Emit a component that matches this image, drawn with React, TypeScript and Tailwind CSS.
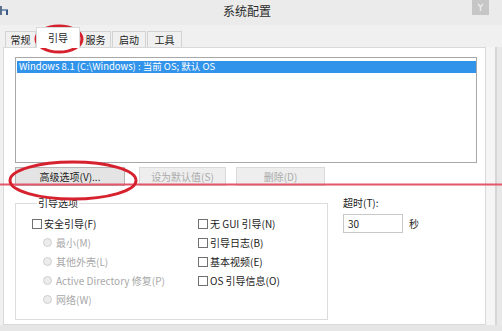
import React from "react";

function Check({ label }: { label: string }) {
  return (
    <div className="flex h-[19px] items-center">
      <span className="w-[10px] h-[10px] border border-[#707070] bg-white" />
      <span className="ml-[2px]">{label}</span>
    </div>
  );
}

function Radio({ label }: { label: string }) {
  return (
    <div className="flex h-[19px] items-center pl-[11px] text-[#a8a8a8]">
      <span className="w-[9px] h-[9px] rounded-full border border-[#cfcfcf] bg-[#ececec]" />
      <span className="ml-[4px]">{label}</span>
    </div>
  );
}

function Tab({ label, w, selected }: { label: string; w: string; selected?: boolean }) {
  return selected ? (
    <div className={`${w} h-[21px] -mb-px relative z-10 bg-white border border-b-0 border-[#d9d9d9] flex items-center justify-center text-[10px]`}>
      {label}
    </div>
  ) : (
    <div className={`${w} h-[16px] bg-[#f0f0f0] border border-b-0 border-[#d3d3d3] flex items-center justify-center text-[10px]`}>
      {label}
    </div>
  );
}

export default function App() {
  return (
    <div className="relative w-[502px] h-[331px] overflow-hidden bg-[#f0f0f0] font-['Noto_Sans_CJK_SC','Noto_Sans',sans-serif] text-[10px] leading-none text-[#1c1c1c]">
      {/* title bar */}
      <div className="h-[25px] bg-[#ebebeb] flex items-start">
        <div className="w-[10px] pt-[5px]">
          <svg width="10" height="11" viewBox="0 0 10 11">
            <rect x="0" y="1" width="2" height="9" fill="#5a6f8c" />
            <rect x="2" y="4" width="6" height="2" fill="#7d95b8" />
            <rect x="6" y="5" width="2" height="5" fill="#3e5a86" />
          </svg>
        </div>
        <div className="ml-[213px] pt-[5px] text-[12px] text-[#2a2a2a]">系统配置</div>
        <div className="flex-1" />
        <div className="mr-[13px] w-[17px] h-[15px] bg-[#c6c6c6] flex items-center justify-center">
          <svg width="7" height="9" viewBox="0 0 7 9">
            <path d="M1 1 L3.5 4 L6 1 M3.5 4 L3.5 8" stroke="#ebebeb" strokeWidth="1.4" fill="none" />
          </svg>
        </div>
      </div>

      {/* tabs */}
      <div className="h-[22px] flex items-end pl-[5px]">
        <Tab label="常规" w="w-[31px]" />
        <Tab label="引导" w="w-[44px]" selected />
        <Tab label="服务" w="w-[31px]" />
        <div className="w-[1px]" />
        <Tab label="启动" w="w-[34px]" />
        <div className="w-[1px]" />
        <Tab label="工具" w="w-[35px]" />
      </div>

      {/* body */}
      <div className="flex h-[278px]">
        <div className="ml-[3px] w-[483px] h-full bg-white border border-[#d9d9d9] flex flex-col">
          {/* list */}
          <div className="ml-[11px] mt-[9px] w-[462px] h-[106px] border border-[#a8a8a8] pt-[3px] pl-[1px]">
            <div className="h-[12px] bg-[#3193e9] text-white text-[9.5px] flex items-center pl-[2px] whitespace-nowrap">
              Windows 8.1 (C:\Windows) : 当前 OS; 默认 OS
            </div>
          </div>

          {/* buttons */}
          <div className="mt-[4px] flex h-[19px]">
            <div className="ml-[11px] w-[110px] h-full bg-[#e4e4e4] border border-[#b4b4b4] flex items-center justify-center">
              高级选项(V)...
            </div>
            <div className="ml-[14px] w-[87px] h-full bg-[#eeeeee] border border-[#dadada] flex items-center justify-center text-[#ababab]">
              设为默认值(S)
            </div>
            <div className="ml-[10px] w-[89px] h-full bg-[#eeeeee] border border-[#dadada] flex items-center justify-center text-[#ababab]">
              删除(D)
            </div>
          </div>

          {/* options */}
          <div className="mt-[11px] flex">
            <fieldset className="ml-[11px] w-[313px] h-[123px] border border-[#dcdcdc] pl-[16px]">
              <legend className="ml-[5px] px-[1px] h-[12px] leading-[12px]">引导选项</legend>
              <div className="mt-[5px] grid grid-cols-[166px_1fr]">
                <div className="flex flex-col">
                  <Check label="安全引导(F)" />
                  <Radio label="最小(M)" />
                  <Radio label="其他外壳(L)" />
                  <Radio label="Active Directory 修复(P)" />
                  <Radio label="网络(W)" />
                </div>
                <div className="flex flex-col">
                  <Check label="无 GUI 引导(N)" />
                  <Check label="引导日志(B)" />
                  <Check label="基本视频(E)" />
                  <Check label="OS 引导信息(O)" />
                </div>
              </div>
            </fieldset>
            <div className="ml-[15px] flex flex-col">
              <div className="h-[12px] leading-[12px]">超时(T):</div>
              <div className="mt-[5px] flex items-center">
                <div className="w-[60px] h-[19px] border border-[#c8c8c8] bg-white flex items-center pl-[4px]">30</div>
                <span className="ml-[6px]">秒</span>
              </div>
            </div>
          </div>
        </div>
        {/* right edge */}
        <div className="flex-1 flex">
          <div className="w-[9px] bg-[#f5f5f5]" />
          <div className="w-[2px] bg-[#d6d6d6]" />
          <div className="flex-1 bg-[#e8e8e8]" />
        </div>
      </div>
      <div className="h-[6px] bg-[#e6e6e6]" />

      {/* annotations */}
      <svg className="absolute inset-0 pointer-events-none" width="502" height="331" viewBox="0 0 502 331">
        <line x1="0" y1="184.5" x2="502" y2="184.5" stroke="#e4566a" strokeWidth="2" />
        <ellipse cx="59" cy="39" rx="23" ry="13" fill="none" stroke="#d6222e" strokeWidth="3" />
        <ellipse cx="73" cy="180.5" rx="63" ry="18.5" fill="none" stroke="#d6222e" strokeWidth="3" />
      </svg>
    </div>
  );
}
